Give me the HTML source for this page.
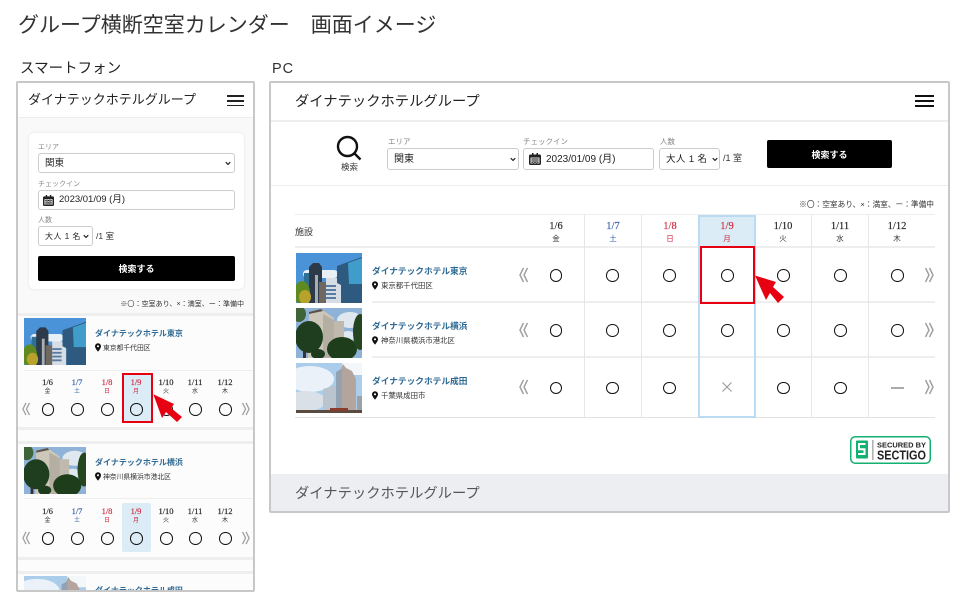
<!DOCTYPE html>
<html lang="ja">
<head>
<meta charset="utf-8">
<title>グループ横断空室カレンダー 画面イメージ</title>
<style>
html,body{margin:0;padding:0;background:#fff}
#r{position:relative;width:960px;height:600px;overflow:hidden;background:#fff;font-family:"Liberation Sans","Noto Sans CJK JP",sans-serif;color:#222}
#r div,#r svg{position:absolute;box-sizing:border-box}
.t{white-space:nowrap}
.lb{font-size:7px;line-height:10px;color:#888;white-space:nowrap}
#pc .lb{font-size:7.500px}
.f{background:#fff;border:1px solid #ccc;border-bottom-width:1.500px;border-radius:3px;font-size:9.500px;color:#222;white-space:nowrap}
#pc .f{font-size:10px}
.d{width:30px;text-align:center;font-family:"Liberation Serif","Noto Sans CJK JP",serif;font-size:8.500px;line-height:12px;color:#222;-webkit-text-stroke:.15px}
#pc .d{font-size:10.500px}
.w{width:30px;text-align:center;font-size:6px;line-height:10px;color:#333}
#pc .w{font-size:7.500px}
#r .bl{color:#2c5aa8}#r .rd{color:#d0263c}
.c{width:12.500px;height:12.500px;border:1.500px solid #111;border-radius:50%}
.n{font-size:8px;font-weight:700;line-height:12px;color:#2f6a94;white-space:nowrap}
#pc .n{font-size:8.700px}
.a{font-size:6.800px;line-height:10px;color:#333;white-space:nowrap}
#pc .a{font-size:7.400px}
.ln{background:#eee}
.v{background:#e6e6e6;width:1px}
</style>
</head>
<body>
<div id="r">
<svg width="0" height="0" style="left:0;top:0">
<defs>
<symbol id="p1" viewBox="0 0 66 50" preserveAspectRatio="none">
<rect width="66" height="50" fill="#4a93d8"/>
<rect x="7" y="17" width="35" height="8" rx="4" fill="#e8eff5"/>
<rect x="8" y="20" width="6" height="14" fill="#2f6f96"/>
<path d="M13 14l4-4h6l3 4v36H13z" fill="#2c3a49"/>
<rect x="19" y="22" width="3" height="28" fill="#a8aeb2"/>
<rect x="23" y="29" width="9" height="21" fill="#6f6860"/>
<rect x="30" y="25" width="15" height="25" fill="#d6dde4"/>
<path d="M30 32h10v2H30zM30 36h10v2H30zM30 40h10v2H30zM30 44h10v2H30z" fill="#5a7ca2"/>
<path d="M41 13l25-9v46H45V32l-4-2z" fill="#2d5a7e"/>
<path d="M52 10l14-5v26H53z" fill="#3f9ccb"/>
<ellipse cx="6" cy="40" rx="8" ry="12" fill="#5f8a22"/>
<ellipse cx="9" cy="44" rx="6" ry="7" fill="#b8a22c"/>
</symbol>
<symbol id="p2" viewBox="0 0 66 50" preserveAspectRatio="none">
<rect width="66" height="50" fill="#8fb2d8"/>
<ellipse cx="54" cy="12" rx="13" ry="8" fill="#dfe7ef"/>
<ellipse cx="52" cy="28" rx="8" ry="5" fill="#dfe7ef"/>
<path d="M38 13h10v30H38z" fill="#bfb9ae"/>
<path d="M13 4l12-3 13 9v40H12z" fill="#cdc7ba"/>
<path d="M13 4l12-3 2 2-14 3z" fill="#5a5148"/>
<path d="M27 6l11 6v38H27z" fill="#b5afa3"/>
<ellipse cx="3" cy="6" rx="7" ry="8" fill="#3f6438"/>
<ellipse cx="13" cy="29" rx="14" ry="16" fill="#1f3e20"/>
<rect x="7" y="42" width="3" height="8" fill="#333"/>
<ellipse cx="22" cy="46" rx="7" ry="5" fill="#1e3b1e"/>
<ellipse cx="46" cy="41" rx="15" ry="12" fill="#1e3d1a"/>
<ellipse cx="64" cy="24" rx="7" ry="18" fill="#24451f"/>
</symbol>
<symbol id="p3" viewBox="0 0 66 50" preserveAspectRatio="none">
<rect width="66" height="50" fill="#a9cdea"/>
<ellipse cx="14" cy="16" rx="24" ry="13" fill="#eaf1f8"/>
<ellipse cx="10" cy="38" rx="20" ry="10" fill="#d9e0e8"/>
<rect x="46" y="0" width="20" height="12" fill="#f4f7fa"/>
<path d="M40 9l5-3 2-5 3 4 6 3 4 8v34H40z" fill="#b3a59d"/>
<path d="M40 9l6-3v44h-6z" fill="#93a2b3"/>
<path d="M27 26l13-4v28H27z" fill="#b9c4cf"/>
<rect x="61" y="33" width="5" height="14" fill="#9aa2a6"/>
<rect y="47" width="66" height="3" fill="#5a4a3f"/>
<rect x="34" y="45" width="18" height="3" fill="#8a3c2c"/>
</symbol>
<symbol id="pin" viewBox="0 0 10 14"><path d="M5 0a5 5 0 0 1 5 5c0 3.400-5 9-5 9S0 8.400 0 5a5 5 0 0 1 5-5zm0 3.200a1.800 1.800 0 1 0 0 3.600 1.800 1.800 0 0 0 0-3.600z" fill="#111" fill-rule="evenodd"/></symbol>
<symbol id="cal" viewBox="0 0 12 12"><path d="M3 0h1.500v1.500h3V0H9v1.500h1.500A1.500 1.500 0 0 1 12 3v7.500a1.500 1.500 0 0 1-1.500 1.500h-9A1.500 1.500 0 0 1 0 10.500V3a1.500 1.500 0 0 1 1.500-1.500H3z" fill="#222"/><path d="M1.500 4.500h9v6h-9z" fill="#ddd"/><path d="M2.500 5.500h7v1h-7zM2.500 7.500h7v1h-7zM2.500 9.300h7v.7h-7zM4 5v5.500h.8V5zM7.200 5v5.500h.8V5z" fill="#222"/></symbol>
<symbol id="cd" viewBox="0 0 8 6"><path d="M1 1.200l3 3 3-3" fill="none" stroke="#222" stroke-width="1.600"/></symbol>
<symbol id="cl" viewBox="0 0 9 16"><path d="M4.500 1L1 8l3.500 7M8.500 1L5 8l3.500 7" fill="none" stroke="#a0a0a0" stroke-width="1.500"/></symbol>
<symbol id="cr" viewBox="0 0 9 16"><path d="M.5 1L4 8 .5 15M4.500 1L8 8l-3.500 7" fill="none" stroke="#a0a0a0" stroke-width="1.500"/></symbol>
</defs>
</svg>

<div class="t" style="left:18px;top:12px;font-size:21px;line-height:28px;color:#333">グループ横断空室カレンダー　画面イメージ</div>
<div class="t" style="left:20px;top:59px;font-size:14.500px;line-height:20px;color:#222">スマートフォン</div>
<div class="t" style="left:272px;top:59px;font-size:14.500px;line-height:20px;color:#333;letter-spacing:1px">PC</div>

<!-- PHONE -->
<div style="left:16px;top:81px;width:239px;height:511px;border:2px solid #c8c8c8;border-radius:2px;background:#fcfcfc;overflow:hidden">
<div style="left:0;top:0;width:235px;height:35px;border-bottom:1px solid #eee;background:#fff"></div>
<div style="left:0;top:35px;width:235px;height:195px;background:#f9f9f9"></div>
<div class="t" style="left:10px;top:6px;font-size:13px;line-height:22px;color:#222">ダイナテックホテルグループ</div>
<div style="left:209px;top:12px;width:17px;height:1.500px;background:#222"></div>
<div style="left:209px;top:17px;width:17px;height:1.500px;background:#222"></div>
<div style="left:209px;top:21.500px;width:17px;height:1.500px;background:#222"></div>

<div style="left:11px;top:50px;width:215px;height:156px;background:#fff;border-radius:5px;box-shadow:0 0 2px #ddd"></div>
<div class="lb" style="left:20px;top:60px">エリア</div>
<div class="f" style="left:20px;top:70px;width:197px;height:20px;padding:0 0 0 6px;line-height:20px">関東</div>
<svg width="6" height="5" style="left:207px;top:78px"><use href="#cd"/></svg>
<div class="lb" style="left:20px;top:97px">チェックイン</div>
<div class="f" style="left:20px;top:107px;width:197px;height:20px;padding-left:20px;line-height:18px">2023/01/09 (月)</div>
<svg width="11" height="11" style="left:25px;top:111.500px"><use href="#cal"/></svg>
<div class="lb" style="left:20px;top:133px">人数</div>
<div class="f" style="left:20px;top:143px;width:55px;height:20px;padding-left:6px;line-height:20px;font-size:8px;letter-spacing:.5px">大人 1 名</div>
<svg width="6" height="5" style="left:65px;top:151px"><use href="#cd"/></svg>
<div class="t" style="left:78px;top:147px;font-size:8.500px;line-height:12px;color:#333">/1 室</div>
<div class="t" style="left:20px;top:172.500px;width:197px;height:25px;background:#000;border-radius:2px;color:#fff;font-size:9px;font-weight:700;line-height:26px;text-align:center">検索する</div>
<div class="t" style="right:9px;top:217px;font-size:7.050px;line-height:10px;color:#333">※〇：空室あり、×：満室、ー：準備中</div>

<!-- sec 1 -->
<div class="ln" style="left:0;top:230px;width:235px;height:2.500px"></div>
<svg width="62" height="47" style="left:6px;top:235px"><use href="#p1" width="62" height="47"/></svg>
<div class="n" style="left:77px;top:245px">ダイナテックホテル東京</div>
<svg width="6" height="9" style="left:76.500px;top:260px"><use href="#pin" width="6" height="9"/></svg>
<div class="a" style="left:85px;top:261px">東京都千代田区</div>
<div class="ln" style="left:6px;top:286.500px;width:229px;height:1px"></div>
<div style="left:104px;top:290px;width:31px;height:50px;background:#dcecf7"></div>
<div class="d" style="left:14.500px;top:293px">1/6</div><div class="w" style="left:14.500px;top:304px">金</div>
<div class="d bl" style="left:44px;top:293px">1/7</div><div class="w bl" style="left:44px;top:304px">土</div>
<div class="d rd" style="left:74px;top:293px">1/8</div><div class="w rd" style="left:74px;top:304px">日</div>
<div class="d rd" style="left:103px;top:293px">1/9</div><div class="w rd" style="left:103px;top:304px">月</div>
<div class="d" style="left:133px;top:293px">1/10</div><div class="w" style="left:133px;top:304px">火</div>
<div class="d" style="left:162px;top:293px">1/11</div><div class="w" style="left:162px;top:304px">水</div>
<div class="d" style="left:192px;top:293px">1/12</div><div class="w" style="left:192px;top:304px">木</div>
<svg width="8" height="14" style="left:4px;top:319px"><use href="#cl" width="8" height="14"/></svg>
<svg width="8" height="14" style="left:224px;top:319px"><use href="#cr" width="8" height="14"/></svg>
<div class="c" style="left:23.500px;top:320px"></div><div class="c" style="left:53px;top:320px"></div><div class="c" style="left:83px;top:320px"></div><div class="c" style="left:112px;top:320px"></div><div class="c" style="left:142px;top:320px"></div><div class="c" style="left:171px;top:320px"></div><div class="c" style="left:201px;top:320px"></div>
<div class="ln" style="left:0;top:344px;width:235px;height:2.500px"></div>

<!-- sec 2 -->
<div class="ln" style="left:0;top:358px;width:235px;height:2.500px"></div>
<svg width="62" height="47" style="left:6px;top:364px"><use href="#p2" width="62" height="47"/></svg>
<div class="n" style="left:77px;top:374px">ダイナテックホテル横浜</div>
<svg width="6" height="9" style="left:76.500px;top:389px"><use href="#pin" width="6" height="9"/></svg>
<div class="a" style="left:85px;top:390px">神奈川県横浜市港北区</div>
<div class="ln" style="left:6px;top:415px;width:229px;height:1px"></div>
<div style="left:104px;top:420px;width:29px;height:49px;background:#dcecf7;border-radius:2px"></div>
<div class="d" style="left:14.500px;top:422px">1/6</div><div class="w" style="left:14.500px;top:433px">金</div>
<div class="d bl" style="left:44px;top:422px">1/7</div><div class="w bl" style="left:44px;top:433px">土</div>
<div class="d rd" style="left:74px;top:422px">1/8</div><div class="w rd" style="left:74px;top:433px">日</div>
<div class="d rd" style="left:103px;top:422px">1/9</div><div class="w rd" style="left:103px;top:433px">月</div>
<div class="d" style="left:133px;top:422px">1/10</div><div class="w" style="left:133px;top:433px">火</div>
<div class="d" style="left:162px;top:422px">1/11</div><div class="w" style="left:162px;top:433px">水</div>
<div class="d" style="left:192px;top:422px">1/12</div><div class="w" style="left:192px;top:433px">木</div>
<svg width="8" height="14" style="left:4px;top:448px"><use href="#cl" width="8" height="14"/></svg>
<svg width="8" height="14" style="left:224px;top:448px"><use href="#cr" width="8" height="14"/></svg>
<div class="c" style="left:23.500px;top:449px"></div><div class="c" style="left:53px;top:449px"></div><div class="c" style="left:83px;top:449px"></div><div class="c" style="left:112px;top:449px"></div><div class="c" style="left:142px;top:449px"></div><div class="c" style="left:171px;top:449px"></div><div class="c" style="left:201px;top:449px"></div>
<div class="ln" style="left:0;top:474px;width:235px;height:2.500px"></div>

<!-- sec 3 -->
<div class="ln" style="left:0;top:488px;width:235px;height:2.500px"></div>
<svg width="62" height="47" style="left:6px;top:493px"><use href="#p3" width="62" height="47"/></svg>
<div class="n" style="left:77px;top:502px">ダイナテックホテル成田</div>
</div>
<div style="left:122px;top:373px;width:31px;height:50px;border:2.500px solid #e60012"></div>
<svg width="960" height="600" style="left:0;top:0"><polygon points="153.300,394.300 174,404 171,408 182,417 177,422 166,412 162,418" fill="#e60012"/></svg>

<!-- PC -->
<div id="pc" style="left:269px;top:81px;width:681px;height:432px;border:2px solid #c8c8c8;border-radius:2px;background:#fff;overflow:hidden">
<div class="ln" style="left:0;top:37px;width:677px;height:2px"></div>
<div class="t" style="left:24px;top:7px;font-size:14.300px;line-height:24px;color:#222">ダイナテックホテルグループ</div>
<div style="left:644px;top:12px;width:19px;height:1.500px;background:#111"></div>
<div style="left:644px;top:17px;width:19px;height:1.500px;background:#111"></div>
<div style="left:644px;top:22px;width:19px;height:1.500px;background:#111"></div>
<svg width="26" height="26" viewBox="0 0 26 26" style="left:65px;top:52px"><circle cx="11.500" cy="11.500" r="9.500" fill="none" stroke="#111" stroke-width="2.400"/><path d="M18.500 18.500l6 6" stroke="#111" stroke-width="2.400" fill="none"/></svg>
<div class="t" style="left:70px;top:78px;font-size:8.500px;line-height:12px;color:#333">検索</div>
<div class="lb" style="left:117px;top:54px">エリア</div>
<div class="f" style="left:116px;top:65px;width:132px;height:22px;padding-left:6px;line-height:22px">関東</div>
<svg width="6" height="5" style="left:239px;top:74px"><use href="#cd"/></svg>
<div class="lb" style="left:252px;top:54px">チェックイン</div>
<div class="f" style="left:252px;top:65px;width:131px;height:22px;padding-left:22px;line-height:22px">2023/01/09 (月)</div>
<svg width="12" height="12" style="left:258px;top:70px"><use href="#cal"/></svg>
<div class="lb" style="left:389px;top:54px">人数</div>
<div class="f" style="left:388px;top:65px;width:61px;height:22px;padding-left:6px;line-height:22px;font-size:9.500px;letter-spacing:.4px">大人 1 名</div>
<svg width="6" height="5" style="left:441px;top:74px"><use href="#cd"/></svg>
<div class="t" style="left:452px;top:69px;font-size:9px;line-height:12px;color:#333">/1 室</div>
<div class="t" style="left:496px;top:57px;width:125px;height:28px;background:#000;border-radius:2px;color:#fff;font-size:9px;font-weight:700;line-height:31px;text-align:center">検索する</div>
<div class="ln" style="left:0;top:102px;width:677px;height:1px"></div>
<div class="t" style="right:14px;top:117px;font-size:7.700px;line-height:10px;color:#333">※〇：空室あり、×：満室、ー：準備中</div>

<div class="ln" style="left:24px;top:131px;width:640px;height:1px"></div>
<div class="ln" style="left:24px;top:163px;width:640px;height:2px"></div>
<div class="ln" style="left:101px;top:218px;width:563px;height:2px"></div>
<div class="ln" style="left:101px;top:273px;width:563px;height:2px"></div>
<div class="ln" style="left:24px;top:334px;width:640px;height:1px;background:#e2e2e2"></div>
<div class="v" style="left:313px;top:132px;height:202px"></div><div class="v" style="left:370px;top:132px;height:202px"></div><div class="v" style="left:540px;top:132px;height:202px"></div><div class="v" style="left:597px;top:132px;height:202px"></div>

<div style="left:427px;top:132px;width:57px;height:32px;background:#dcecf7"></div>
<div style="left:427px;top:132px;width:58px;height:203px;border:2px solid #b9dcf2"></div>

<div class="t" style="left:24px;top:142px;font-size:9px;line-height:14px;color:#333">施設</div>
<div class="d" style="left:270px;top:138px">1/6</div><div class="w" style="left:270px;top:151px">金</div>
<div class="d bl" style="left:327px;top:138px">1/7</div><div class="w bl" style="left:327px;top:151px">土</div>
<div class="d rd" style="left:384px;top:138px">1/8</div><div class="w rd" style="left:384px;top:151px">日</div>
<div class="d rd" style="left:441px;top:138px">1/9</div><div class="w rd" style="left:441px;top:151px">月</div>
<div class="d" style="left:497px;top:138px">1/10</div><div class="w" style="left:497px;top:151px">火</div>
<div class="d" style="left:554px;top:138px">1/11</div><div class="w" style="left:554px;top:151px">水</div>
<div class="d" style="left:611px;top:138px">1/12</div><div class="w" style="left:611px;top:151px">木</div>

<svg width="66" height="50" style="left:25px;top:170px"><use href="#p1" width="66" height="50"/></svg>
<svg width="66" height="50" style="left:25px;top:225px"><use href="#p2" width="66" height="50"/></svg>
<svg width="66" height="50" style="left:25px;top:280px"><use href="#p3" width="66" height="50"/></svg>

<div class="n" style="left:101px;top:182px">ダイナテックホテル東京</div>
<svg width="6" height="9" style="left:100.500px;top:198px"><use href="#pin" width="6" height="9"/></svg>
<div class="a" style="left:110px;top:198px">東京都千代田区</div>
<div class="n" style="left:101px;top:237px">ダイナテックホテル横浜</div>
<svg width="6" height="9" style="left:100.500px;top:253px"><use href="#pin" width="6" height="9"/></svg>
<div class="a" style="left:110px;top:253px">神奈川県横浜市港北区</div>
<div class="n" style="left:101px;top:292px">ダイナテックホテル成田</div>
<svg width="6" height="9" style="left:100.500px;top:308px"><use href="#pin" width="6" height="9"/></svg>
<div class="a" style="left:110px;top:308px">千葉県成田市</div>

<svg width="9" height="16" style="left:248px;top:184px"><use href="#cl" width="9" height="16"/></svg>
<svg width="9" height="16" style="left:248px;top:239px"><use href="#cl" width="9" height="16"/></svg>
<svg width="9" height="16" style="left:248px;top:296px"><use href="#cl" width="9" height="16"/></svg>
<svg width="9" height="16" style="left:654px;top:184px"><use href="#cr" width="9" height="16"/></svg>
<svg width="9" height="16" style="left:654px;top:239px"><use href="#cr" width="9" height="16"/></svg>
<svg width="9" height="16" style="left:654px;top:296px"><use href="#cr" width="9" height="16"/></svg>

<div class="c" style="left:278.500px;top:186px"></div><div class="c" style="left:335px;top:186px"></div><div class="c" style="left:392px;top:186px"></div><div class="c" style="left:450px;top:186px"></div><div class="c" style="left:506px;top:186px"></div><div class="c" style="left:563px;top:186px"></div><div class="c" style="left:620px;top:186px"></div>
<div class="c" style="left:278.500px;top:241px"></div><div class="c" style="left:335px;top:241px"></div><div class="c" style="left:392px;top:241px"></div><div class="c" style="left:450px;top:241px"></div><div class="c" style="left:506px;top:241px"></div><div class="c" style="left:563px;top:241px"></div><div class="c" style="left:620px;top:241px"></div>
<div class="c" style="left:278.500px;top:298.500px"></div><div class="c" style="left:335px;top:298.500px"></div><div class="c" style="left:392px;top:298.500px"></div><div class="c" style="left:506px;top:298.500px"></div><div class="c" style="left:563px;top:298.500px"></div>
<svg width="12" height="12" viewBox="0 0 12 12" style="left:450px;top:298px"><path d="M1.500 1.500l9 9M10.500 1.500l-9 9" stroke="#999" stroke-width="1.100" fill="none"/></svg>
<div style="left:620px;top:304px;width:13px;height:1.500px;background:#aaa"></div>

<svg width="81" height="28" viewBox="0 0 81 28" style="left:579px;top:353px"><rect x=".75" y=".75" width="79.500" height="26.500" rx="4.500" fill="#fff" stroke="#12b071" stroke-width="1.500"/><rect x="6" y="4.500" width="12" height="18" rx="1" fill="#12b071"/><path d="M15.500 8H9v5.200h5.500V18H8" fill="none" stroke="#fff" stroke-width="2"/><rect x="22.500" y="4" width=".8" height="20" fill="#666"/><text x="27" y="11.500" font-family="Liberation Sans,sans-serif" font-size="7.500" font-weight="700" fill="#222" textLength="49" lengthAdjust="spacingAndGlyphs">SECURED BY</text><text x="27" y="23.500" font-family="Liberation Sans,sans-serif" font-size="12.500" font-weight="700" fill="#222" textLength="49" lengthAdjust="spacingAndGlyphs">SECTIGO</text></svg>

<div style="left:0;top:391px;width:677px;height:37px;background:#eceef1"></div>
<div class="t" style="left:24px;top:400px;font-size:14.300px;line-height:22px;color:#555">ダイナテックホテルグループ</div>
</div>
<div style="left:700px;top:246px;width:55px;height:58px;border:2.500px solid #e60012"></div>
<svg width="960" height="600" style="left:0;top:0"><polygon points="755,275.500 776,282 773,287 784,297 778,303 770,293 766,300" fill="#e60012"/></svg>
</div>
</body>
</html>
